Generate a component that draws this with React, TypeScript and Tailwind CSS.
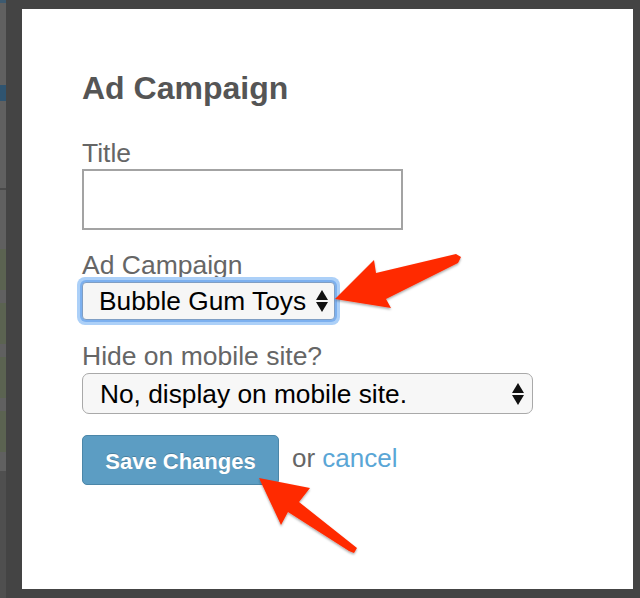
import React from "react";

function SelectArrows() {
  return (
    <svg width="12" height="22" viewBox="0 0 12 22" className="shrink-0">
      <polygon points="6,0 12,10 0,10" fill="#111" />
      <polygon points="0,12 12,12 6,22" fill="#111" />
    </svg>
  );
}

function LeftStrip() {
  return (
    <div className="w-[6px] h-full flex flex-col bg-[#606060] shrink-0">
      <div className="h-[3px] bg-[#3d5a70]" />
      <div className="h-[82px]" />
      <div className="h-[16px] bg-[#2f5470]" />
      <div className="h-[87px]" />
      <div className="h-[2px] bg-[#4a4a4a]" />
      <div className="h-[59px]" />
      <div className="h-[41px] bg-[#5b6351]" />
      <div className="h-[13px]" />
      <div className="h-[41px] bg-[#5b6351]" />
      <div className="h-[13px]" />
      <div className="h-[41px] bg-[#5b6351]" />
      <div className="h-[13px]" />
      <div className="h-[41px] bg-[#5b6351]" />
      <div className="h-[19px]" />
      <div className="flex-1 bg-[#4f4f4f]" />
    </div>
  );
}

export default function App() {
  return (
    <div className="relative w-[640px] h-[598px] overflow-hidden bg-[#444444] flex font-['Liberation_Sans',Arial,sans-serif]">
      <LeftStrip />
      <div className="ml-[16px] mt-[9px] w-[611px] h-[580px] bg-white flex flex-col items-start pl-[60px] pt-[61px]">
        <h1 className="text-[32px] leading-[36px] font-bold text-[#555555]">Ad Campaign</h1>

        <label className="mt-[32px] text-[26.5px] leading-[30px] text-[#666666]">Title</label>
        <div className="mt-[1px] w-[321px] h-[61px] border-2 border-[#a3a3a3] bg-white" />

        <label className="mt-[20px] text-[26.5px] leading-[30px] text-[#666666]">Ad Campaign</label>
        <div className="mt-[-3px] ml-[-5px] w-[263px] h-[48px] rounded-[8px] bg-[#acd0f8] p-[3px]">
          <div className="w-full h-full rounded-[6px] bg-[#7cb0ef] p-[2px]">
            <div className="w-full h-full rounded-[4px] border border-[#7f9ec4] bg-[#f6f6f6] flex items-center justify-between pl-[16px] pr-[6px]">
              <span className="text-[26.3px] leading-[30px] text-black">Bubble Gum Toys</span>
              <SelectArrows />
            </div>
          </div>
        </div>

        <label className="mt-[16px] text-[26.5px] leading-[30px] text-[#666666]">Hide on mobile site?</label>
        <div className="mt-[2px] w-[451px] h-[41px] rounded-[7px] border border-[#a9a9a9] bg-[#f7f7f7] flex items-center justify-between pl-[17px] pr-[8px]">
          <span className="text-[26.3px] leading-[30px] text-black">No, display on mobile site.</span>
          <SelectArrows />
        </div>

        <div className="mt-[21px] flex items-center">
          <button className="w-[197px] h-[50px] rounded-[5px] bg-[#5c9dc3] border border-[#4b86a8] text-white text-[22px] leading-[26px] font-bold pt-[3px] [text-shadow:0_-1px_0_rgba(0,0,0,0.2)]">
            Save Changes
          </button>
          <span className="ml-[13px] mt-[-4px] text-[26px] leading-[30px] text-[#666666]">
            or <span className="text-[#5aa6d6]">cancel</span>
          </span>
        </div>
      </div>

      <svg className="absolute inset-0 pointer-events-none" width="640" height="598" viewBox="0 0 640 598">
        <defs>
          <filter id="sh" x="-20%" y="-20%" width="140%" height="140%">
            <feDropShadow dx="0" dy="1.5" stdDeviation="1.2" floodColor="#000" floodOpacity="0.35" />
          </filter>
        </defs>
        <polygon
          filter="url(#sh)"
          fill="#ff2a00"
          points="335,299 374,260 376,273 456,254 461,257 458,263 386,299 391,308"
        />
        <polygon
          filter="url(#sh)"
          fill="#ff2a00"
          points="259,478 310,488 299,502 357,548 354,553 349,551 288,512 281,525"
        />
      </svg>
    </div>
  );
}
